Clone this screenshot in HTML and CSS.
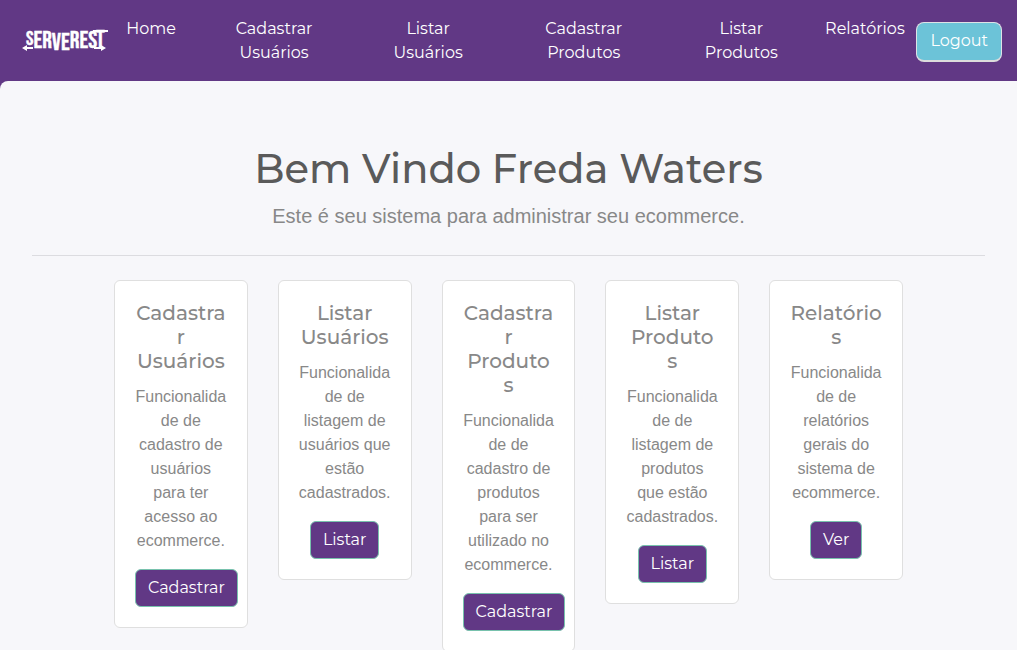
FILE: index.html
```html
<!DOCTYPE html>
<html lang="pt-BR">
<head>
<meta charset="utf-8">
<meta name="viewport" content="width=device-width, initial-scale=1">
<title>ServeRest</title>
<link rel="stylesheet" href="styles.css">
</head>
<body>
<nav class="navbar">
  <a class="brand" href="#">
    <svg class="logo" viewBox="0 0 86 26" role="img" aria-label="SERVEREST">
      <text class="logo-text" x="4" y="17" fill="#fff" stroke="#fff" stroke-width=".4"><tspan font-size="20">S</tspan><tspan y="20">ER</tspan><tspan y="22">VE</tspan><tspan y="20">RES</tspan><tspan x="74" y="19">T</tspan></text>
      <path fill="#fff" d="M0 20l5-3v2h6v2H5v2zM84 20l-5-3v2h-7v2h7v2zM71 2h15v2H71z"/>
    </svg>
  </a>
  <ul class="nav-list">
    <li><a href="#">Home</a></li>
    <li><a href="#">Cadastrar<br>Usuários</a></li>
    <li><a href="#">Listar<br>Usuários</a></li>
    <li><a href="#">Cadastrar<br>Produtos</a></li>
    <li><a href="#">Listar<br>Produtos</a></li>
    <li><a href="#">Relatórios</a></li>
  </ul>
  <button class="logout" type="button">Logout</button>
</nav>
<main class="content">
  <h1 class="title">Bem Vindo Freda Waters</h1>
  <p class="lead">Este é seu sistema para administrar seu ecommerce.</p>
  <hr class="divider">
  <div class="row">
    <div class="col"><article class="card">
      <h2 class="card-title">Cadastrar Usuários</h2>
      <p class="card-text">Funcionalidade de cadastro de usuários para ter acesso ao ecommerce.</p>
      <a class="btn" href="#">Cadastrar</a>
    </article></div>
    <div class="col"><article class="card">
      <h2 class="card-title">Listar Usuários</h2>
      <p class="card-text">Funcionalidade de listagem de usuários que estão cadastrados.</p>
      <a class="btn" href="#">Listar</a>
    </article></div>
    <div class="col"><article class="card">
      <h2 class="card-title">Cadastrar Produtos</h2>
      <p class="card-text">Funcionalidade de cadastro de produtos para ser utilizado no ecommerce.</p>
      <a class="btn" href="#">Cadastrar</a>
    </article></div>
    <div class="col"><article class="card">
      <h2 class="card-title">Listar Produtos</h2>
      <p class="card-text">Funcionalidade de listagem de produtos que estão cadastrados.</p>
      <a class="btn" href="#">Listar</a>
    </article></div>
    <div class="col"><article class="card">
      <h2 class="card-title">Relatórios</h2>
      <p class="card-text">Funcionalidade de relatórios gerais do sistema de ecommerce.</p>
      <a class="btn" href="#">Ver</a>
    </article></div>
  </div>
</main>
</body>
</html>
```
FILE: styles.css
```css
* { box-sizing: border-box; }
html { scrollbar-width: none; }
body {
  margin: 0;
  background: #613885;
  color: #888;
  font: 16px/24px "Liberation Sans", Arial, sans-serif;
}
h1, h2, p, ul { margin: 0; padding: 0; }
a { color: inherit; text-decoration: none; }

.navbar {
  display: flex;
  align-items: center;
  padding: 9px 15px 8px 22px;
  background: #613885;
  color: #fff;
  font-family: Montserrat, Inter, sans-serif;
}
.brand { flex: none; }
.logo { display: block; width: 86px; height: 26px; overflow: visible; }
.logo-text { font: 400 24px "Bebas Neue", Oswald, "Roboto Condensed", sans-serif; }
.nav-list {
  flex: 1;
  display: grid;
  grid-template-columns: 86fr 160fr 148fr 163fr 152fr 95fr;
  list-style: none;
  text-align: center;
}
.nav-list a { display: block; padding: 8px 0; }
.logout {
  flex: none;
  margin: 2px 0 0 4px;
  padding: 6px 13px 7px;
  border: 1px solid #dee2e6;
  border-bottom: 2px solid #dcdcdc;
  border-radius: 8px;
  background: #6cc3d8;
  color: #fff;
  font: inherit;
}

.content {
  min-height: calc(100vh - 81px);
  padding: 64px 32px;
  border-top-left-radius: 8px;
  background: #f7f7fa;
  text-align: center;
}
.title {
  margin-bottom: 8px;
  color: #5a5a5a;
  font: 500 40px/48px Montserrat, Inter, sans-serif;
}
.lead { font-size: 20px; line-height: 30px; }
.divider { margin: 24px 0; border: 0; border-top: 1px solid #dcdce0; }

.row {
  display: flex;
  align-items: flex-start;
  justify-content: center;
  margin: 0 -15px;
}
.col { flex: 0 0 calc(100% / 6); min-width: 0; padding: 0 15px; }
.card {
  padding: 20px;
  border: 1px solid #dfdfdf;
  border-radius: 6px;
  background: #fff;
  overflow-wrap: break-word;
}
.card-title {
  margin-bottom: 12px;
  font: 500 20px/24px Montserrat, Inter, sans-serif;
}
.card-text { margin-bottom: 16px; }
.btn {
  display: inline-block;
  padding: 6px 12px;
  border: 1px solid #78c2ad;
  border-radius: 6px;
  background: #613885;
  color: #fff;
  font-family: Montserrat, Inter, sans-serif;
  vertical-align: top;
  white-space: nowrap;
}
```
